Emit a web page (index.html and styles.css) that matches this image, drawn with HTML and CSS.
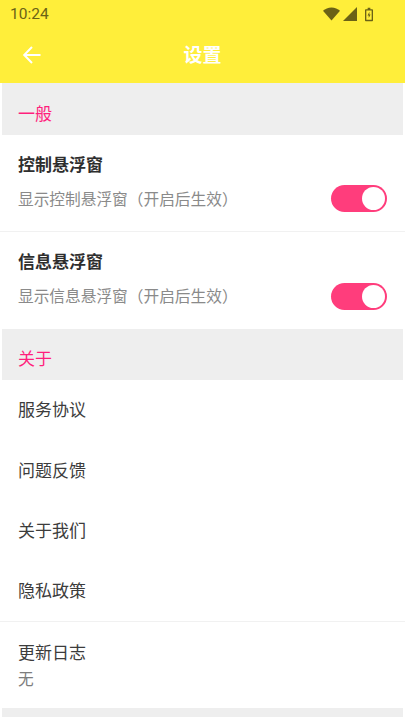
FILE: index.html
```html
<!DOCTYPE html>
<html lang="zh-CN">
<head>
<meta charset="utf-8">
<title>设置</title>
<link rel="stylesheet" href="styles.css">
</head>
<body>
<div class="app">
  <header class="top">
    <div class="status">
      <span class="time">10:24</span>
      <div class="status-icons">
        <svg class="ic-wifi" width="17" height="14" viewBox="0 0 18 14"><path d="M0 3.600C2.300 1.400 5.500 0 9 0s6.700 1.400 9 3.600L9 14z"/></svg>
        <svg class="ic-signal" width="14" height="14" viewBox="0 0 14 14"><path d="M14 0v14H0z"/></svg>
        <svg class="ic-batt" width="8" height="15" viewBox="0 0 9 15"><path fill-rule="evenodd" d="M3 0h3v1.500h2.200c.4 0 .8.400.8.800v12c0 .4-.4.700-.8.700H.8c-.4 0-.8-.3-.8-.7v-12c0-.4.400-.8.800-.8H3zM1.500 3v10.500h6V3z"/><path d="M5 4.500 2.800 8.500H4.200V11.500L6.300 7.500H4.900z"/></svg>
      </div>
    </div>
    <div class="bar">
      <svg class="back" width="20" height="20" viewBox="0 0 20 20"><path d="M18.500 10H2.500M10 2 2.200 10 10 18" fill="none" stroke="#fff" stroke-width="2"/></svg>
      <h1 class="title">设置</h1>
    </div>
  </header>

  <div class="section">一般</div>
  <div class="row row-switch">
    <div class="text">
      <div class="name strong">控制悬浮窗</div>
      <div class="desc">显示控制悬浮窗（开启后生效）</div>
    </div>
    <div class="switch"><span class="knob"></span></div>
  </div>
  <div class="row row-switch no-line">
    <div class="text">
      <div class="name strong">信息悬浮窗</div>
      <div class="desc">显示信息悬浮窗（开启后生效）</div>
    </div>
    <div class="switch"><span class="knob"></span></div>
  </div>

  <div class="section about">关于</div>
  <div class="row row-plain no-line"><div class="name">服务协议</div></div>
  <div class="row row-plain no-line"><div class="name">问题反馈</div></div>
  <div class="row row-plain no-line"><div class="name">关于我们</div></div>
  <div class="row row-plain"><div class="name">隐私政策</div></div>
  <div class="row row-log no-line">
    <div class="name">更新日志</div>
    <div class="desc desc-log">无</div>
  </div>
  <div class="foot"></div>
</div>
</body>
</html>
```
FILE: styles.css
```css
* { box-sizing: border-box; margin: 0; padding: 0; }
html, body { width: 405px; height: 720px; overflow: hidden; background: #fff; }
body { font-family: "Noto Sans CJK SC", "Noto Sans", sans-serif; }
.app { display: flex; flex-direction: column; height: 720px; }

.top { background: #ffee3a; height: 83px; display: flex; flex-direction: column; flex: none; }
.status { height: 28px; display: flex; align-items: center; justify-content: space-between; padding: 0 32px 0 10px; }
.time { font-family: Roboto, sans-serif; font-size: 15.500px; color: #6b6216; line-height: 28px; }
.status-icons { display: flex; align-items: center; gap: 3px; fill: #6b6216; }
.ic-batt { margin-left: 5px; }
.bar { flex: 1; display: flex; align-items: center; justify-content: center; position: relative; padding-bottom: 3px; }
.back { position: absolute; left: 22px; top: 17px; }
.title { font-size: 19px; font-weight: 700; color: #fff; line-height: 28px; }

.section { height: 52px; flex: none; margin: 0 2px; background: #eeeeee; color: #ff1f7d; font-size: 17px; line-height: 28px; padding: 16px 0 0 16px; }
.section.about { height: 51px; padding-top: 15px; }

.row { background: #fff; border-bottom: 1px solid #f1f1f1; padding: 0 18px; flex: none; }
.no-line { border-bottom: 0; }
.row-switch { height: 97px; display: flex; align-items: center; justify-content: space-between; }
.text { padding-bottom: 6px; }
.row-plain { height: 60.500px; display: flex; align-items: center; padding-bottom: 2px; }
.row-log { height: 86px; padding-top: 16px; }

.name { font-size: 17px; line-height: 28px; color: #3c3c3c; }
.name.strong { font-weight: 700; color: #2e2e2e; }
.desc { font-size: 15.700px; line-height: 24px; color: #8a8a8a; margin-top: 9px; }
.desc-log { margin-top: 1px; color: #7d7d7d; }

.switch { width: 56px; height: 27px; border-radius: 14px; background: #ff3d7c; position: relative; margin-top: 31px; flex: none; }
.knob { position: absolute; right: 2px; top: 2px; width: 23px; height: 23px; border-radius: 50%; background: #fff; }

.foot { height: 9px; flex: none; margin: 0 2px; background: #eeeeee; }
```
